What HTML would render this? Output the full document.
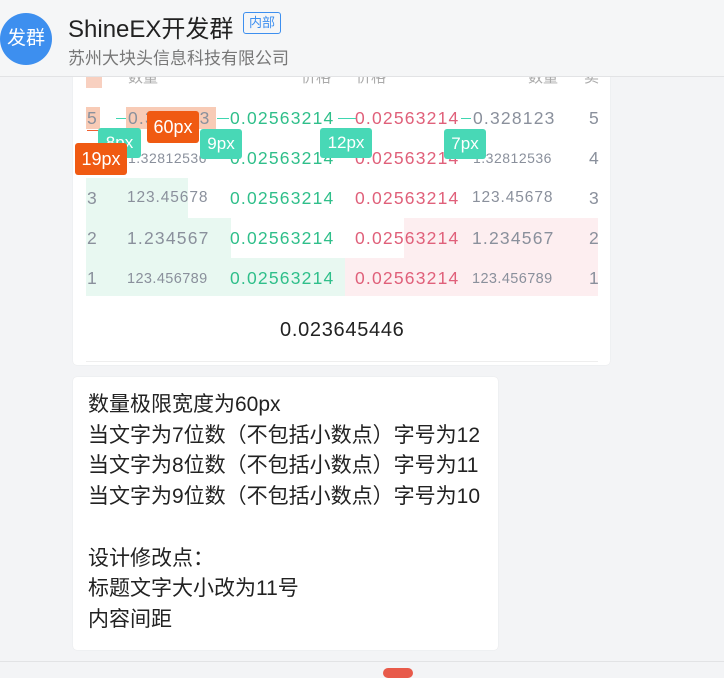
<!DOCTYPE html>
<html><head><meta charset="utf-8"><style>
*{margin:0;padding:0;box-sizing:border-box}
body{width:724px;height:672px;background:#f3f4f6;font-family:"Liberation Sans","Noto Sans CJK SC",sans-serif;position:relative;overflow:hidden}
.abs{position:absolute}
.hdr{left:0;top:0;width:724px;height:77px;background:#f5f6f7;border-bottom:1px solid #e2e3e5;z-index:5}
.av{left:0;top:13px;width:52px;height:52px;border-radius:50%;background:#3d8fef;color:#fff;font-size:19px;line-height:52px;text-align:center;z-index:6}
.card{background:#fff;border-radius:4px;box-shadow:0 0 1px rgba(0,0,0,.12)}
.num{font-size:17.5px;letter-spacing:1.2px;white-space:nowrap}
.g{color:#2fbf8a}.r{color:#e0607a}.gr{color:#8a909c}
.tag{color:#fff;font-size:17px;border-radius:3px;text-align:center;line-height:30px;height:30px}
.tx{font-size:21px;color:#222;line-height:30.7px;white-space:nowrap}
.z{z-index:6}
</style></head><body>
<div class="abs hdr"></div>
<div class="abs av">发群</div>
<div class="abs z" style="left:68px;top:9px;font-size:24px;color:#222">ShineEX开发群</div>
<div class="abs z" style="left:243px;top:12px;width:38px;height:22px;border:1px solid #3d8fef;border-radius:3px;color:#3d8fef;font-size:13px;line-height:20px;text-align:center">内部</div>
<div class="abs z" style="left:68px;top:44px;font-size:17px;color:#777">苏州大块头信息科技有限公司</div>

<div class="abs card" style="left:73px;top:70px;width:537px;height:295px;border-radius:0 0 4px 4px"></div>
<!-- header row -->
<div class="abs" style="left:86px;top:74px;width:16px;height:14px;background:#f8d0c0"></div>
<div class="abs" style="left:128px;top:66px;font-size:15px;color:#aaa">数量</div>
<div class="abs" style="left:301px;top:66px;font-size:15px;color:#aaa">价格</div>
<div class="abs" style="left:356px;top:66px;font-size:15px;color:#aaa">价格</div>
<div class="abs" style="left:528px;top:66px;font-size:15px;color:#aaa">数量</div>
<div class="abs" style="left:584px;top:66px;font-size:15px;color:#aaa">卖</div>
<!-- backgrounds -->
<div class="abs" style="left:86px;top:178px;width:102px;height:40px;background:#e8f8f1"></div>
<div class="abs" style="left:86px;top:218px;width:145px;height:40px;background:#e8f8f1"></div>
<div class="abs" style="left:86px;top:258px;width:259px;height:38px;background:#e8f8f1"></div>
<div class="abs" style="left:404px;top:218px;width:194px;height:40px;background:#fdeef0"></div>
<div class="abs" style="left:345px;top:258px;width:253px;height:38px;background:#fdeef0"></div>
<div class="abs" style="left:86px;top:107px;width:14px;height:22px;background:#f8cbb6"></div>
<div class="abs" style="left:126px;top:107px;width:90px;height:22px;background:#f8cbb6"></div>
<!-- rows -->
<div class="abs num gr" style="left:87px;top:108px">5</div>
<div class="abs num gr" style="left:128px;top:108px">0.328123</div>
<div class="abs num g" style="left:230px;top:108px">0.02563214</div>
<div class="abs num r" style="left:355px;top:108px">0.02563214</div>
<div class="abs num gr" style="left:473px;top:108px">0.328123</div>
<div class="abs num gr" style="left:589px;top:108px">5</div>

<div class="abs num gr" style="left:87px;top:148px">4</div>
<div class="abs num gr" style="left:128px;top:150px;font-size:14px;letter-spacing:.5px">1.32812536</div>
<div class="abs num g" style="left:230px;top:148px">0.02563214</div>
<div class="abs num r" style="left:355px;top:148px">0.02563214</div>
<div class="abs num gr" style="left:473px;top:150px;font-size:14px;letter-spacing:.5px">1.32812536</div>
<div class="abs num gr" style="left:589px;top:148px">4</div>

<div class="abs num gr" style="left:87px;top:188px">3</div>
<div class="abs num gr" style="left:127px;top:189px;font-size:15.5px;letter-spacing:.9px">123.45678</div>
<div class="abs num g" style="left:230px;top:188px">0.02563214</div>
<div class="abs num r" style="left:355px;top:188px">0.02563214</div>
<div class="abs num gr" style="left:472px;top:189px;font-size:15.5px;letter-spacing:.9px">123.45678</div>
<div class="abs num gr" style="left:589px;top:188px">3</div>

<div class="abs num gr" style="left:87px;top:228px">2</div>
<div class="abs num gr" style="left:127px;top:228px">1.234567</div>
<div class="abs num g" style="left:230px;top:228px">0.02563214</div>
<div class="abs num r" style="left:355px;top:228px">0.02563214</div>
<div class="abs num gr" style="left:472px;top:228px">1.234567</div>
<div class="abs num gr" style="left:589px;top:228px">2</div>

<div class="abs num gr" style="left:87px;top:268px">1</div>
<div class="abs num gr" style="left:127px;top:271px;font-size:14.5px;letter-spacing:.4px">123.456789</div>
<div class="abs num g" style="left:230px;top:268px">0.02563214</div>
<div class="abs num r" style="left:355px;top:268px">0.02563214</div>
<div class="abs num gr" style="left:472px;top:271px;font-size:14.5px;letter-spacing:.4px">123.456789</div>
<div class="abs num gr" style="left:589px;top:268px">1</div>

<!-- measure tags -->
<div class="abs" style="left:116px;top:118px;width:10px;height:1px;background:#3fd6b0"></div>
<div class="abs" style="left:217px;top:118px;width:12px;height:1px;background:#3fd6b0"></div>
<div class="abs" style="left:338px;top:118px;width:18px;height:1px;background:#3fd6b0"></div>
<div class="abs" style="left:461px;top:118px;width:10px;height:1px;background:#3fd6b0"></div>
<div class="abs" style="left:87px;top:130px;width:40px;height:1px;background:#f06030"></div>
<div class="abs tag" style="left:98px;top:128px;width:43px;background:#48d8b6">8px</div>
<div class="abs tag" style="left:200px;top:129px;width:42px;background:#48d8b6">9px</div>
<div class="abs tag" style="left:320px;top:128px;width:52px;background:#48d8b6">12px</div>
<div class="abs tag" style="left:444px;top:129px;width:42px;background:#48d8b6">7px</div>
<div class="abs tag" style="left:147px;top:111px;width:52px;height:32px;line-height:32px;background:#f05a12;font-size:18px">60px</div>
<div class="abs tag" style="left:75px;top:143px;width:52px;height:32px;line-height:32px;background:#f05a12;font-size:18px">19px</div>

<div class="abs" style="left:280px;top:319px;font-size:20px;letter-spacing:.7px;color:#222">0.023645446</div>
<div class="abs" style="left:86px;top:361px;width:512px;height:1px;background:#eee"></div>

<div class="abs card" style="left:73px;top:377px;width:425px;height:273px"></div>
<div class="abs tx" style="left:88px;top:390px">数量极限宽度为60px<br>当文字为7位数（不包括小数点）字号为12<br>当文字为8位数（不包括小数点）字号为11<br>当文字为9位数（不包括小数点）字号为10<br><br>设计修改点：<br>标题文字大小改为11号<br>内容间距</div>

<div class="abs" style="left:0;top:661px;width:724px;height:1px;background:#e2e3e5"></div>
<div class="abs" style="left:383px;top:668px;width:30px;height:10px;border-radius:5px;background:#e85a4a"></div>
</body></html>
